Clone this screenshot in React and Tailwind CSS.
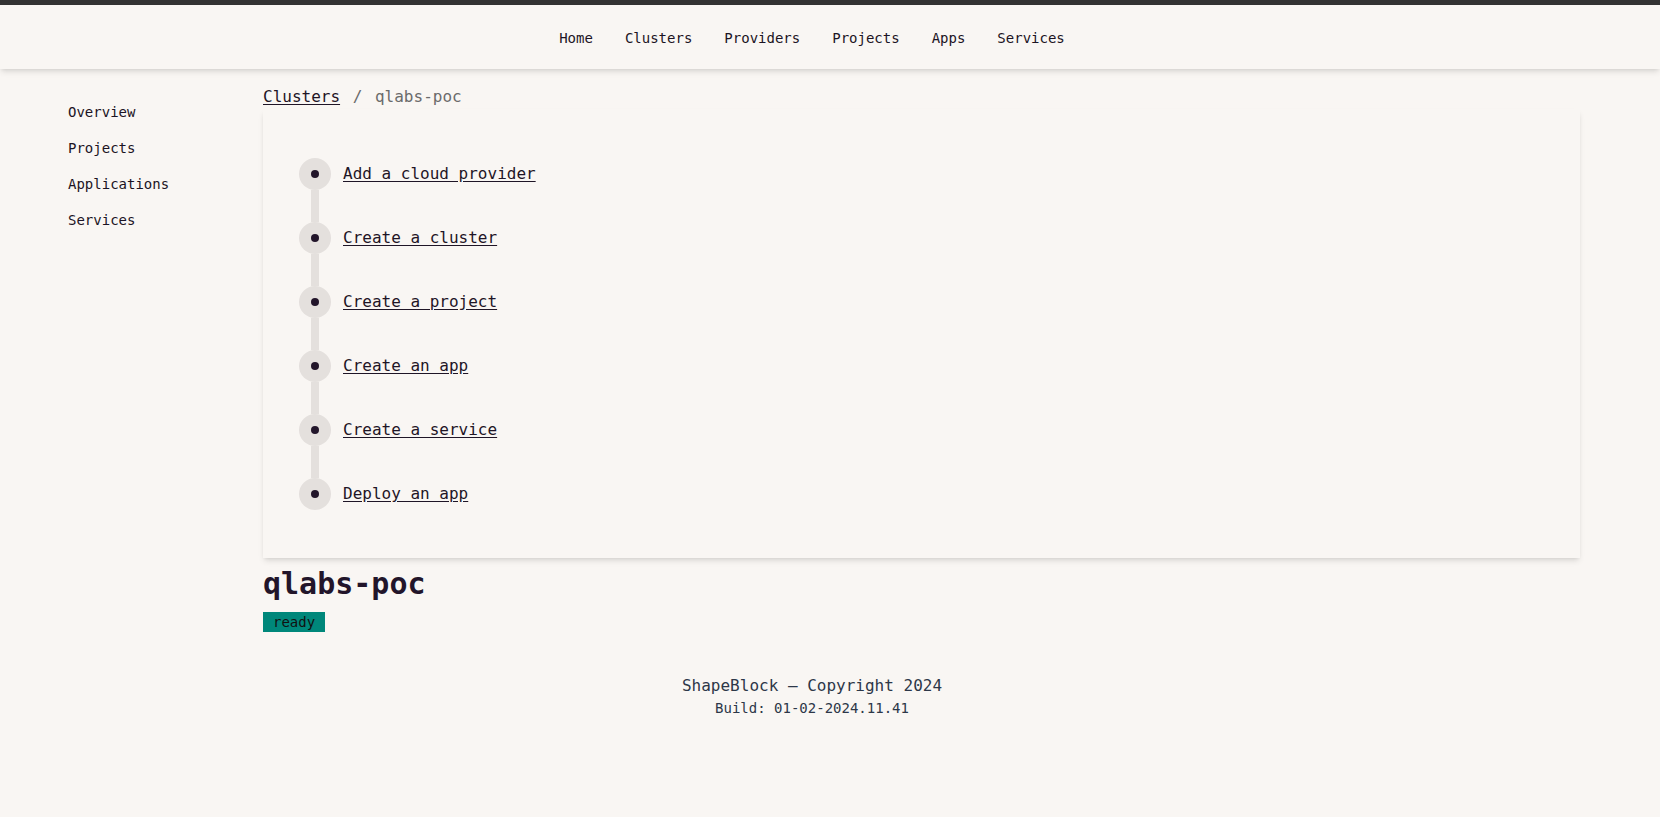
const navLinks = ['Home', 'Clusters', 'Providers', 'Projects', 'Apps', 'Services'];
const sideLinks = ['Overview', 'Projects', 'Applications', 'Services'];
const steps = [
  'Add a cloud provider',
  'Create a cluster',
  'Create a project',
  'Create an app',
  'Create a service',
  'Deploy an app',
];

function Step({ label }) {
  return (
    <div className="flex items-center gap-3 h-8">
      <div className="h-8 w-8 rounded-full bg-[#e4e0dd] flex items-center justify-center">
        <div className="h-2 w-2 rounded-full bg-[#22152a]"></div>
      </div>
      <a href="#" className="text-base underline underline-offset-2 text-[#1f1526]">
        {label}
      </a>
    </div>
  );
}

export default function App() {
  return (
    <div className="min-h-[817px] bg-[#f9f6f3] text-[#1f1526] font-['DejaVu_Sans_Mono',monospace]">
      <div className="h-[5px] bg-[#333333]"></div>

      {/* Top nav */}
      <header className="h-16 pt-[2px] bg-[#f9f6f3] shadow-md relative z-10 flex items-center justify-center gap-8 pr-[36px] text-sm">
        {navLinks.map((l) => (
          <a key={l} href="#" className="text-[#1c1424]">
            {l}
          </a>
        ))}
      </header>

      <div className="flex">
        {/* Sidebar */}
        <aside className="w-[263px] shrink-0 pl-[68px] pt-[25px]">
          <nav className="flex flex-col text-sm">
            {sideLinks.map((l) => (
              <a key={l} href="#" className="py-2 text-[#1c1424]">
                {l}
              </a>
            ))}
          </nav>
        </aside>

        {/* Main */}
        <main className="flex-1 pr-[80px] pt-4">
          <div className="text-base">
            <a href="#" className="underline underline-offset-2 text-[#1f1526]">Clusters</a>
            <span className="text-[#6b6b6b] mx-[3px]"> / </span>
            <span className="text-[#6b6b6b]">qlabs-poc</span>
          </div>

          <div className="shadow-md pl-9 pt-[49px] pb-12">
            <div className="flex flex-col">
              {steps.map((s, i) => (
                <div key={s}>
                  {i > 0 && <div className="ml-3 h-8 w-2 bg-[#e4e0dd]"></div>}
                  <Step label={s} />
                </div>
              ))}
            </div>
          </div>

          <h1 className="mt-[8px] text-3xl font-bold text-[#22152a]">qlabs-poc</h1>
          <span className="mt-[10px] inline-block bg-[#00877a] px-2.5 text-sm leading-5 text-[#111]">
            ready
          </span>
        </main>
      </div>

      <footer className="mt-[40px] pr-[36px] text-center text-[#2d3748]">
        <p className="text-base">ShapeBlock — Copyright 2024</p>
        <p className="text-sm">Build: 01-02-2024.11.41</p>
      </footer>
    </div>
  );
}
